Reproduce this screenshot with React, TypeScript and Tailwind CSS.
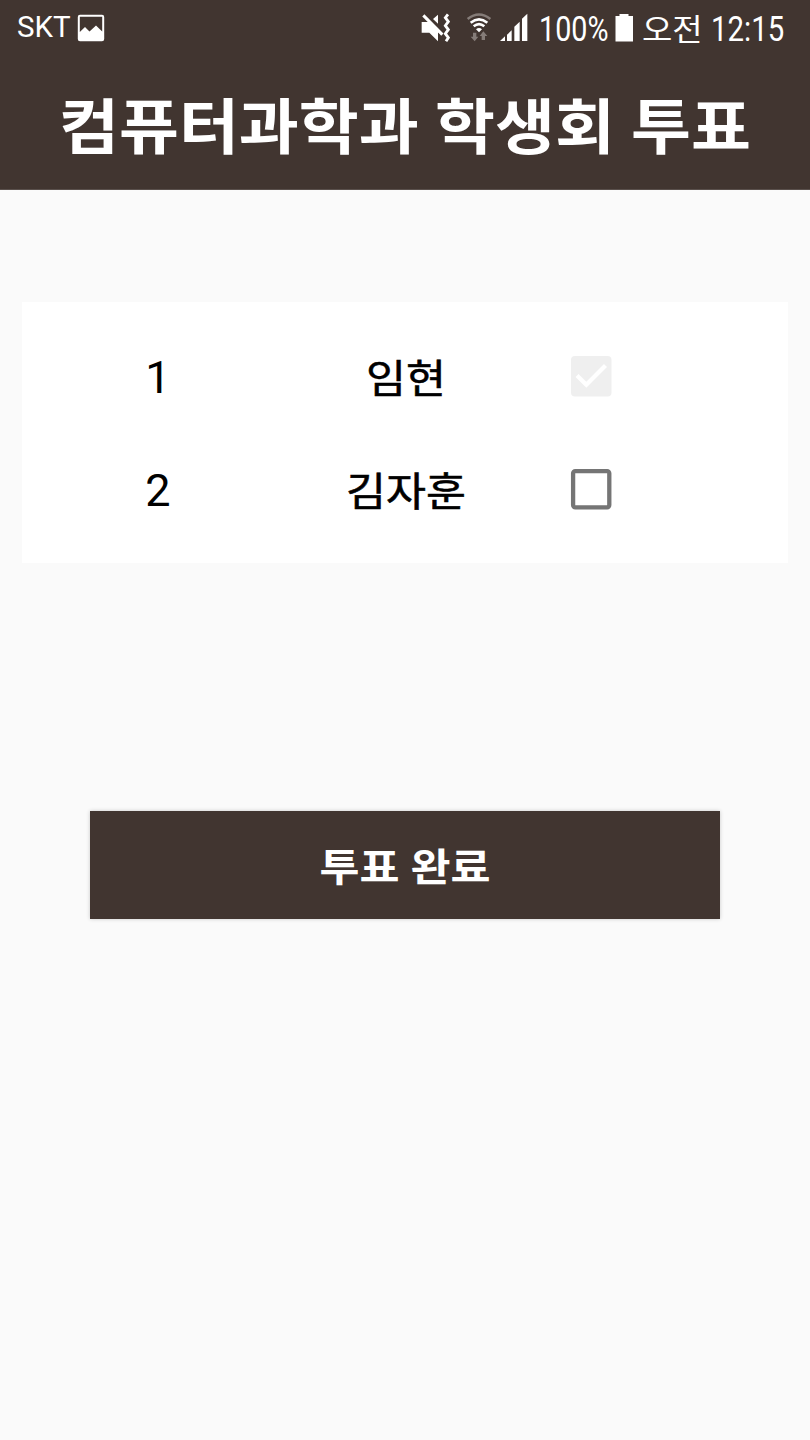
import React from 'react';

const candidates = [
  { id: 1, name: '임현', checked: true },
  { id: 2, name: '김자훈', checked: false },
];

function CheckBox({ checked }: { checked: boolean }) {
  return checked ? (
    <svg className="block h-[42px] w-[42px]" viewBox="0 0 42 42">
      <rect x="1" y="1" width="40.5" height="40.5" rx="4" fill="#efefef" />
      <path d="M7 20.5 L16.3 29.8 L35.5 10.6" fill="none" stroke="#fff" strokeWidth="4.3" />
    </svg>
  ) : (
    <svg className="block h-[42px] w-[42px]" viewBox="0 0 42 42">
      <rect x="3.1" y="3.1" width="36.2" height="36.2" rx="2.2" fill="none" stroke="#757575" strokeWidth="4.3" />
    </svg>
  );
}

function PictureIcon() {
  return (
    <svg className="h-[28px] w-[28px]" viewBox="0 0 28 28">
      <path
        fillRule="evenodd"
        d="M3 .8H25Q27.2 .8 27.2 3V25Q27.2 27.2 25 27.2H3Q.8 27.2 .8 25V3Q.8 .8 3 .8ZM2.800 2.800V18L8 13L12.5 17.5L19 11.500L25.200 17.5V2.800Z"
        fill="#fff"
      />
    </svg>
  );
}

function MuteIcon() {
  return (
    <svg className="h-14 w-[30px]" viewBox="30 0 90 168">
      <path d="M35 66H62L90 94L84 98V124L58 98H35ZM69 57L84 44V71Z" fill="#fff" />
      <path d="M40 46L97 104" stroke="#fff" strokeWidth="9" />
      <path d="M114 43L106 53L115 65L106 77L115 89L106 101L115 113L108 124" fill="none" stroke="#fff" strokeWidth="8.5" />
    </svg>
  );
}

function WifiIcon() {
  return (
    <svg className="h-14 w-[26px]" viewBox="168 0 78 168">
      <path d="M173 57Q207 30 241 57" fill="none" stroke="#857c78" strokeWidth="8" />
      <path d="M182 68Q207 48 232 68M191 79Q207 66 223 79" fill="none" stroke="#fff" strokeWidth="8" />
      <path d="M198 88Q207 80 216 88L207 97Z" fill="#fff" />
      <path d="M189 98H199V110H205L194 124L182 110H189ZM215 120V108H209L220 94L232 108H225V120Z" fill="#857c78" />
    </svg>
  );
}

function SignalIcon() {
  return (
    <svg className="h-14 w-[30px]" viewBox="267 0 90 168">
      <path d="M270 123L285 109V123ZM291 123V104L305 91V123ZM313 123V80L329 65V123ZM336 123V56L352 41V123Z" fill="#fff" />
    </svg>
  );
}

function StatusBar() {
  return (
    <div className="flex h-14 items-center whitespace-nowrap text-white">
      <span className="ml-[17px] w-[60px] text-[29.5px] leading-none">SKT</span>
      <PictureIcon />
      <div className="ml-[315px] flex items-center">
        <MuteIcon />
        <span className="ml-[16px] flex"><WifiIcon /></span>
        <span className="ml-[7px] flex"><SignalIcon /></span>
      </div>
      <span className="ml-[10px] w-[76px]">
        <span className="inline-block origin-left scale-x-[0.82] pt-[3px] text-[35px] leading-none">100%</span>
      </span>
      <svg className="h-14 w-[18px]" viewBox="0 0 18 56">
        <path d="M.5 16H4.500V14H13.500V16H18V41.500H.5Z" fill="#fff" />
      </svg>
      <span className="ml-[9px] w-[69px] scale-y-[0.9] pt-[2px] text-[33px] leading-none">오전</span>
      <span className="inline-block origin-left scale-x-[0.84] pt-[2px] text-[35px] leading-none">12:15</span>
    </div>
  );
}

export default function App() {
  return (
    <div className="min-h-[1440px] w-[810px] bg-[#fafafa] font-['Roboto','Noto_Sans_CJK_KR',sans-serif] text-black">
      <header className="h-[190px] border-b border-[#5a504c] bg-[#413530]">
        <StatusBar />
        <h1 className="mt-[28px] scale-y-[0.92] text-center text-[65.2px] leading-[90px] font-bold whitespace-nowrap text-white">컴퓨터과학과 학생회 투표</h1>
      </header>
      <main className="pt-[112px]">
        <div className="mx-[22px] h-[261px] bg-white pt-[18px]">
          {candidates.map((c) => (
            <div key={c.id} className="flex h-[113px] items-center">
              <span className="ml-[23px] w-[226px] pt-[3px] text-center text-[45px]">{c.id}</span>
              <span className="w-[270px] scale-y-[0.92] pt-[7px] text-center text-[43.5px] [-webkit-text-stroke:0.6px_black]">{c.name}</span>
              <span className="ml-[29px] pb-px"><CheckBox checked={c.checked} /></span>
            </div>
          ))}
        </div>
        <button className="mx-[90px] mt-[248px] block h-[108px] w-[630px] bg-[#413530] text-[43.5px] font-bold text-white shadow-[0_0_4px_rgba(0,0,0,0.2)]">
          <span className="inline-block scale-y-[0.9] pt-[8px]">투표 완료</span>
        </button>
      </main>
    </div>
  );
}
